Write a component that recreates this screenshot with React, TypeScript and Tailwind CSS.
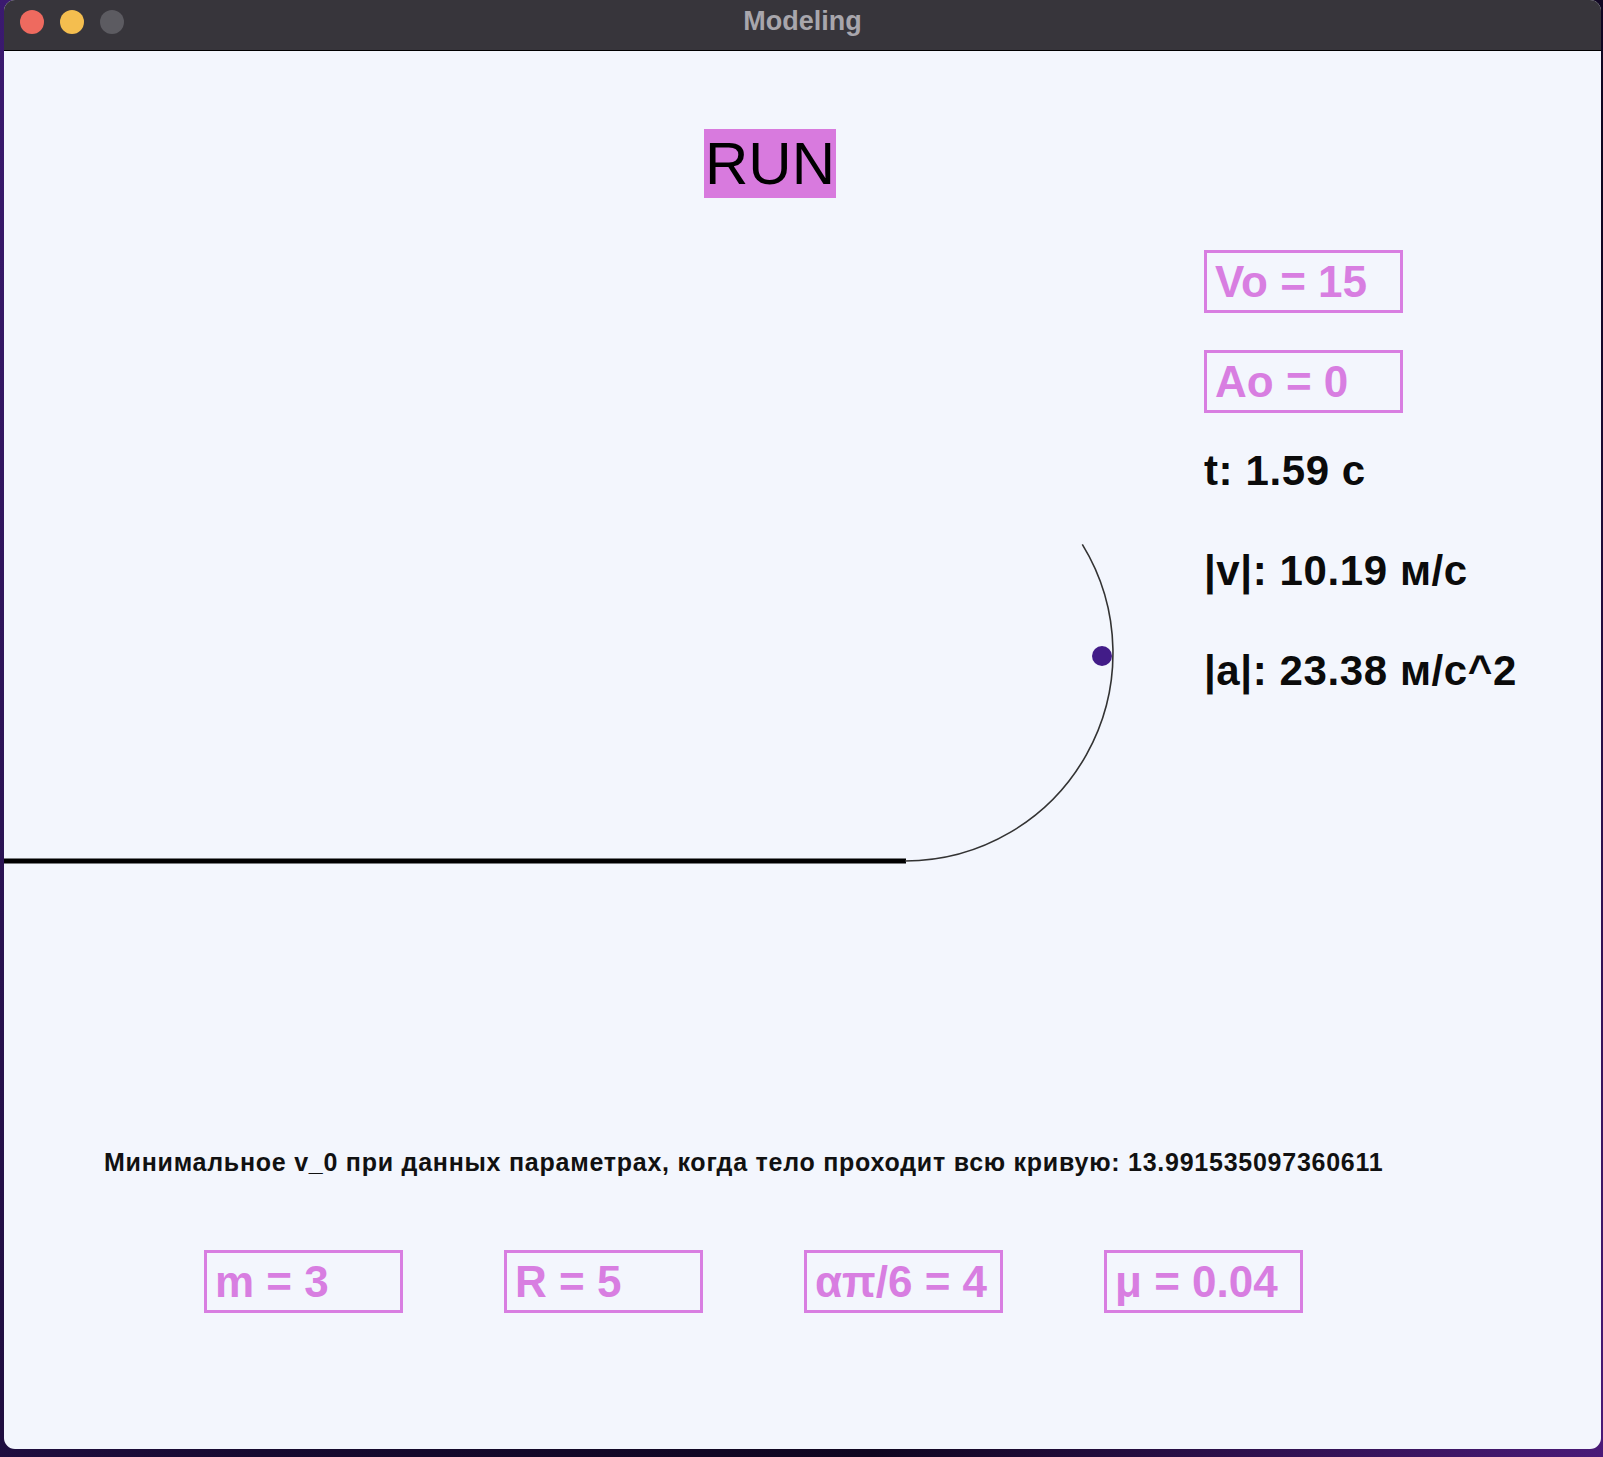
const pink = "text-[#d87ee1]";

function ParamBox({ label }: { label: string }) {
  return (
    <div className="w-[199px] h-[63px] border-[3px] border-[#d87ee1] pl-[8px]">
      <span className={`block text-[44px] leading-[57px] font-bold ${pink}`}>{label}</span>
    </div>
  );
}

function Track() {
  // loop: center (901, 403), r = 208, runs ~121deg up from the bottom point
  return (
    <svg width="1200" height="620" viewBox="0 0 1200 620" className="shrink-0">
      <line x1="0" y1="611" x2="902" y2="611" stroke="#000" strokeWidth="5" />
      <path d="M 901 611 A 208 208 0 0 0 1078.3 294.3" fill="none" stroke="#333" strokeWidth="1.6" />
      <circle cx="1098" cy="406" r="10" fill="#421c88" />
    </svg>
  );
}

export default function App() {
  return (
    <div className="w-[1603px] h-[1457px] bg-[linear-gradient(120deg,#3b1a70_0%,#160a30_45%,#0f0620_70%,#4a1a78_100%)] pl-[4px] font-['Liberation_Sans',Arial,sans-serif]">
      <div className="w-[1597px] h-[1449px] rounded-[11px] overflow-hidden flex flex-col bg-[#f3f6fd]">
        <div className="h-[51px] bg-[#37353b] border-b border-black grid grid-cols-[1fr_auto_1fr] items-start">
          <div className="flex gap-[16px] pl-[16px] pt-[10px]">
            <div className="w-[24px] h-[24px] rounded-full bg-[#ee6a5f]"></div>
            <div className="w-[24px] h-[24px] rounded-full bg-[#f4be4f]"></div>
            <div className="w-[24px] h-[24px] rounded-full bg-[#5c5b61]"></div>
          </div>
          <div className="pt-[5px] text-[27px] leading-[32px] font-bold text-[#a8a6ac]">Modeling</div>
          <div></div>
        </div>

        <div className="flex-1 flex flex-col">
          <div className="mt-[78px] ml-[700px] w-[132px] h-[69px] bg-[#d87ade] flex items-center justify-center text-[60px] leading-[69px] text-black">
            RUN
          </div>

          <div className="mt-[52px] flex">
            <Track />
            <div className="flex flex-col">
              <ParamBox label="Vo = 15" />
              <div className="mt-[37px]">
                <ParamBox label="Ao = 0" />
              </div>
              <div className="mt-[8px] text-[42px] leading-[100px] font-bold tracking-[0.6px] text-[#0b0b0b]">
                <div>t: 1.59 с</div>
                <div>|v|: 10.19 м/с</div>
                <div>|a|: 23.38 м/с^2</div>
              </div>
            </div>
          </div>

          <div className="mt-[278px] ml-[100px] text-[25px] leading-[29px] font-bold tracking-[0.75px] text-[#111]">
            Минимальное v_0 при данных параметрах, когда тело проходит всю кривую: 13.991535097360611
          </div>

          <div className="mt-[73px] ml-[200px] flex gap-[101px]">
            <ParamBox label="m = 3" />
            <ParamBox label="R = 5" />
            <ParamBox label="απ/6 = 4" />
            <ParamBox label="μ = 0.04" />
          </div>
        </div>
      </div>
    </div>
  );
}
